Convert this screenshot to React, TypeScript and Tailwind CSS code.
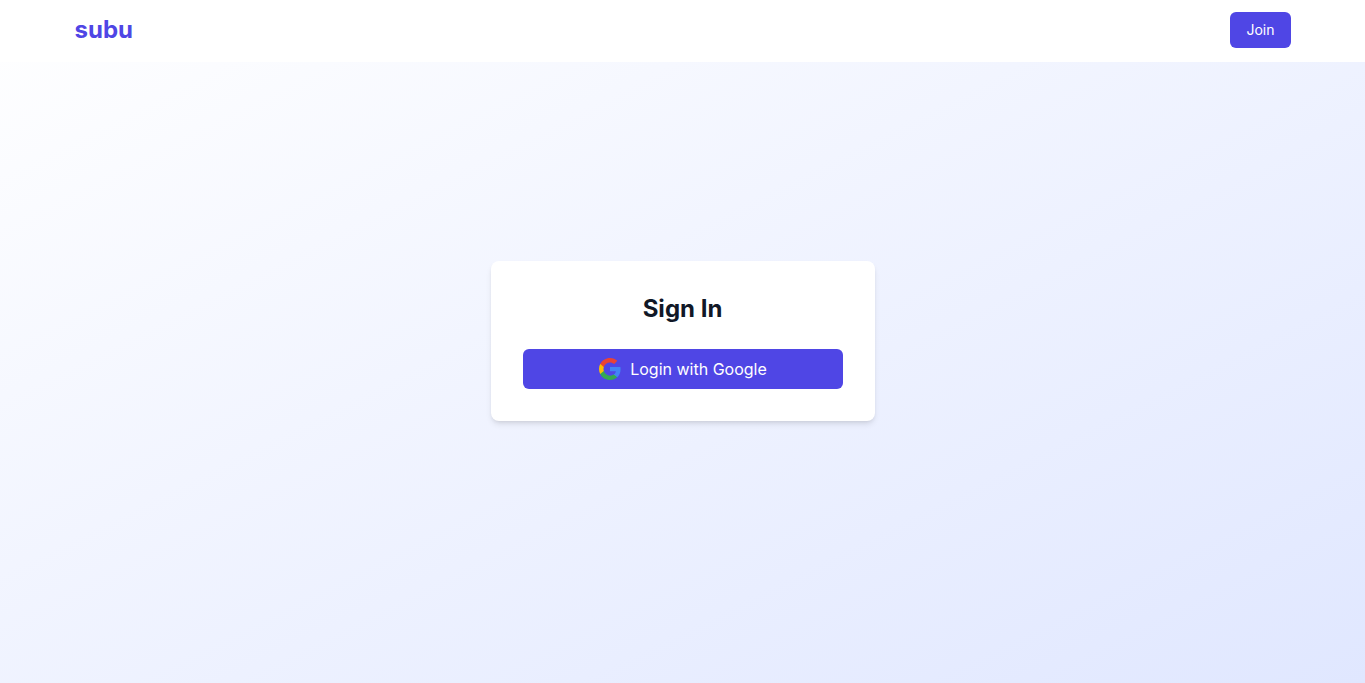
function GoogleLogo() {
  return (
    <svg className="size-6" viewBox="0 0 24 24" aria-hidden="true">
      <path fill="#4285F4" d="M22.56 12.25c0-.78-.07-1.53-.2-2.25H12v4.26h5.92c-.26 1.37-1.04 2.53-2.21 3.31v2.77h3.57c2.08-1.92 3.28-4.74 3.28-8.09z" />
      <path fill="#34A853" d="M12 23c2.97 0 5.46-.98 7.28-2.66l-3.57-2.77c-.98.66-2.23 1.06-3.71 1.06-2.86 0-5.29-1.93-6.16-4.53H2.18v2.84C3.99 20.53 7.7 23 12 23z" />
      <path fill="#FBBC05" d="M5.84 14.09c-.22-.66-.35-1.36-.35-2.09s.13-1.43.35-2.09V7.07H2.18C1.43 8.55 1 10.22 1 12s.43 3.45 1.18 4.93l3.66-2.84z" />
      <path fill="#EA4335" d="M12 5.38c1.62 0 3.06.56 4.21 1.64l3.15-3.15C17.45 2.09 14.97 1 12 1 7.7 1 3.99 3.47 2.18 7.07l3.66 2.84c.87-2.6 3.3-4.53 6.16-4.53z" />
    </svg>
  );
}

export default function App() {
  return (
    <div className="bg-white font-['Inter',sans-serif]">
      <header className="fixed inset-x-0 top-0 z-10 bg-white pt-3 pb-3.5">
        <nav className="mx-auto flex max-w-7xl items-center justify-between px-8">
          <a href="#" className="text-2xl font-bold text-[#4f46e5]">subu</a>
          <button type="button" className="rounded-md bg-[#4f46e5] px-4 py-2 text-sm text-white">
            Join
          </button>
        </nav>
      </header>
      <main className="flex min-h-screen items-center justify-center bg-linear-to-br/srgb from-white to-[#e0e7ff] pb-px">
        <section className="w-full max-w-sm rounded-lg bg-white p-8 shadow-md">
          <h1 className="mb-6 text-center text-2xl font-bold text-[#111827]">Sign In</h1>
          <button type="button" className="flex w-full items-center justify-center gap-2 rounded-md bg-[#4f46e5] px-4 py-2 text-white">
            <GoogleLogo />
            Login with Google
          </button>
        </section>
      </main>
    </div>
  );
}
